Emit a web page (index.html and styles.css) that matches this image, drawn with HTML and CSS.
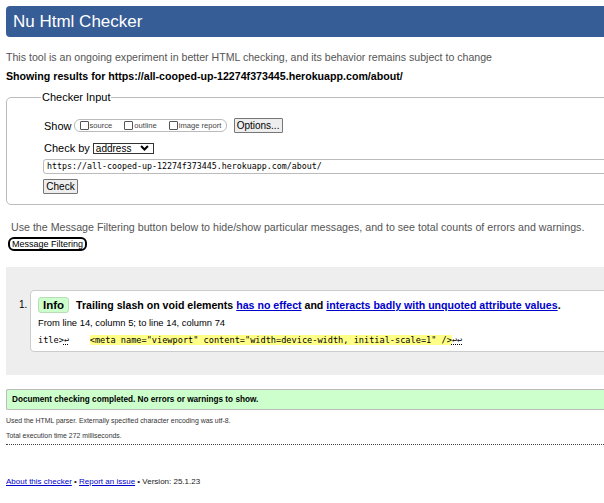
FILE: index.html
```html
<!DOCTYPE html>
<html>
<head>
<meta charset="utf-8">
<link rel="stylesheet" href="styles.css">
</head>
<body>
<div class="page">
  <h1 class="title">Nu Html Checker</h1>
  <p class="intro">This tool is an ongoing experiment in better HTML checking, and its behavior remains subject to change</p>
  <p class="showing">Showing results for https://all-cooped-up-12274f373445.herokuapp.com/about/</p>
  <fieldset class="checker">
    <legend>Checker Input</legend>
    <div class="row show-row">
      <span class="lbl">Show</span>
      <fieldset class="opts">
        <label><span class="cb"></span>source</label>
        <label><span class="cb"></span>outline</label>
        <label><span class="cb"></span>image report</label>
      </fieldset>
      <button class="btn">Options...</button>
    </div>
    <div class="row checkby-row">
      <span class="lbl">Check by</span>
      <span class="select">address<svg class="chev" width="10" height="7" viewBox="0 0 10 7"><path d="M1 1.2 L5 5.2 L9 1.2" fill="none" stroke="#000" stroke-width="2.4"/></svg></span>
    </div>
    <div class="url">https://all-cooped-up-12274f373445.herokuapp.com/about/</div>
    <button class="btn check">Check</button>
  </fieldset>
  <p class="filter-text">Use the Message Filtering button below to hide/show particular messages, and to see total counts of errors and warnings.</p>
  <button class="filter-btn">Message Filtering</button>
  <div class="results">
    <div class="msg">
      <span class="num">1.</span>
      <div class="msg-box">
        <p class="msg-title"><span class="badge">Info</span>Trailing slash on void elements <a href="#">has no effect</a> and <a href="#">interacts badly with unquoted attribute values</a>.</p>
        <p class="loc">From line 14, column 5; to line 14, column 74</p>
        <p class="extract"><code>itle&gt;<span class="lf">↩</span>    <mark>&lt;meta name="viewport" content="width=device-width, initial-scale=1" /&gt;</mark><span class="lf">↩↩</span></code></p>
      </div>
    </div>
  </div>
  <p class="success">Document checking completed. No errors or warnings to show.</p>
  <p class="details">Used the HTML parser. Externally specified character encoding was utf-8.</p>
  <p class="details">Total execution time 272 milliseconds.</p>
  <div class="dotted"></div>
  <p class="footer"><a href="#">About this checker</a> • <a href="#">Report an issue</a> • Version: 25.1.23</p>
</div>
</body>
</html>
```

FILE: styles.css
```css
html { overflow: hidden; }
body {
  margin: 0;
  font-family: "Liberation Sans", Arial, sans-serif;
  color: #000;
  background: #fff;
}
.page {
  width: 660px;
  padding: 6px 0 0 6px;
}
.title {
  margin: 0;
  height: 31px;
  background: #365d95;
  color: #fff;
  font-weight: normal;
  font-size: 17px;
  line-height: 31px;
  padding-left: 7px;
  border-radius: 4px 0 0 4px;
}
.intro {
  margin: 13px 0 0 0;
  font-size: 10.6px;
  color: #555;
  line-height: 14px;
}
.showing {
  margin: 5px 0 0 0;
  font-size: 10.65px;
  font-weight: bold;
  line-height: 14px;
}
.checker {
  margin: 8px 0 0 0;
  border: 1px solid #bbb;
  border-radius: 5px;
  padding: 15px 0 10px 37px;
}
.checker legend {
  font-size: 11px;
  margin-left: -3px;
  padding: 0 1px;
}
.row {
  display: flex;
  align-items: center;
  font-size: 11px;
}
.show-row { height: 15px; }
.lbl { margin-right: 2px; }
.opts {
  display: flex;
  align-items: center;
  margin: 0 7px 0 0;
  padding: 0 0 0 5px;
  width: 146px;
  height: 11px;
  border: 1px solid #bbb;
  border-radius: 6px;
  font-size: 7.6px;
  color: #444;
}
.opts label {
  display: flex;
  align-items: center;
  margin-right: 12px;
}
.opts label:last-child { margin-right: 0; }
.cb {
  width: 7px;
  height: 7px;
  border: 1px solid #555;
  border-radius: 1px;
  margin-right: 1px;
}
.btn {
  font-family: "Liberation Sans", Arial, sans-serif;
  font-size: 10px;
  background: #eee;
  border: 1px solid #767676;
  padding: 0 4px;
  height: 15px;
  line-height: 13px;
  border-radius: 1px;
  color: #000;
}
.show-row .btn { width: 49px; padding: 0; }
.checkby-row { margin-top: 8px; height: 14px; }
.select {
  display: inline-flex;
  align-items: center;
  justify-content: space-between;
  box-sizing: border-box;
  width: 61px;
  height: 11px;
  border: 1px solid #333;
  padding: 0 4px 0 2px;
  font-size: 10px;
  line-height: 11px;
  margin-left: 1px;
}
.chev { width: 9px; height: 6px; }
.url {
  margin-top: 4px;
  margin-left: -1px;
  height: 13px;
  border: 1px solid #bbb;
  border-radius: 3px 0 0 3px;
  font-family: "DejaVu Sans Mono", "Liberation Mono", monospace;
  font-size: 8.3px;
  line-height: 13px;
  padding-left: 3px;
  color: #000;
}
.check {
  margin-top: 5px;
  margin-left: -1px;
  display: block;
  width: 35px;
  padding: 0;
}
.filter-text {
  margin: 15px 0 0 5px;
  font-size: 10.67px;
  color: #555;
  line-height: 14px;
}
.filter-btn {
  margin: 3px 0 0 2px;
  display: block;
  font-family: "Liberation Sans", Arial, sans-serif;
  font-size: 9px;
  height: 14px;
  padding: 0 2px;
  line-height: 10px;
  border: 2px solid #000;
  border-radius: 6px;
  background: #fff;
  color: #000;
}
.results {
  margin-top: 16px;
  background: #eee;
  padding: 23px 0 23px 13px;
}
.msg {
  display: flex;
  align-items: flex-start;
}
.num {
  font-size: 10px;
  width: 11px;
  padding-top: 9px;
}
.msg-box {
  flex: 1;
  background: #fff;
  border: 1px solid #ccc;
  border-radius: 4px 0 0 4px;
  padding: 6px 0 5px 7px;
}
.msg-box p { margin: 0; }
.msg-title {
  font-size: 10.6px;
  font-weight: bold;
  line-height: 17px;
}
.badge {
  display: inline-block;
  background: #ccffcc;
  border: 1px solid #b8ddb8;
  border-radius: 3px;
  padding: 0 4px;
  margin-right: 7px;
  line-height: 14px;
  font-size: 11.5px;
}
.msg-title a { color: #0000cc; text-decoration: underline; }
.loc {
  font-size: 9.4px;
  margin-top: 3px !important;
  line-height: 12px;
}
.extract {
  margin-top: 5px !important;
  font-size: 8.6px;
  line-height: 12px;
  white-space: pre;
}
.extract code {
  font-family: "DejaVu Sans Mono", "Liberation Mono", monospace;
}
.extract mark {
  background: #ffff88;
  color: #000;
}
.lf {
  text-decoration: underline dotted;
}
.success {
  margin: 14px 0 0 0;
  background: #ccffcc;
  border-top: 1px solid #bbb;
  border-bottom: 1px solid #bbb;
  border-left: 1px solid #bbb;
  border-radius: 2px 0 0 2px;
  font-size: 8.2px;
  font-weight: bold;
  line-height: 19px;
  padding-left: 5px;
}
.details {
  margin: 5px 0 0 0;
  font-size: 6.9px;
  color: #333;
  line-height: 11px;
}
.details + .details { margin-top: 4px; }
.dotted {
  margin-top: 3px;
  border-top: 1px dotted #444;
}
.footer {
  margin: 32px 0 0 0;
  font-size: 8px;
  color: #222;
}
.footer a { color: #0000cc; }
```
